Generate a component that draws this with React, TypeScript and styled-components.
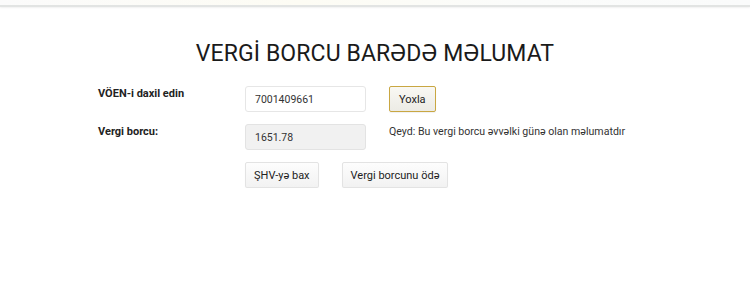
import React from 'react'
import styled, { createGlobalStyle } from 'styled-components'

const GlobalStyle = createGlobalStyle`
  html, body {
    margin: 0;
    padding: 0;
    background: #fff;
    font-family: Roboto, 'Liberation Sans', Arial, sans-serif;
    color: #222;
  }
`

const TopBar = styled.div`
  height: 5px;
  background: linear-gradient(90deg, #fbfbfb, #fdfcf4 40%, #fbfcfb 70%, #fafbfb);
  border-bottom: 2px solid #e2e4e3;
  box-shadow: 0 1px 2px rgba(0, 0, 0, 0.06);
`

const Page = styled.main`
  display: flex;
  flex-direction: column;
`

const Title = styled.h1`
  margin: 32px 0 0;
  text-align: center;
  font-size: 23px;
  font-weight: 400;
  line-height: 30px;
  color: #1a1a1a;
  letter-spacing: 0.1px;
`

const Form = styled.div`
  display: grid;
  grid-template-columns: 124px 121px auto;
  column-gap: 23px;
  row-gap: 12px;
  margin: 17px 0 0 98px;
  align-items: start;
`

const Label = styled.label`
  font-size: 11px;
  font-weight: 700;
  color: #222;
  padding-top: 1px;
  line-height: 14px;
`

const Field = styled.input<{ $readOnly?: boolean }>`
  box-sizing: border-box;
  width: 121px;
  height: 26px;
  padding: 0 9px;
  border: 1px solid ${({ $readOnly }) => ($readOnly ? '#e3e3e3' : '#e6e6e6')};
  border-radius: 3px;
  background: ${({ $readOnly }) => ($readOnly ? '#f1f1f1' : '#fff')};
  font-family: inherit;
  font-size: 10.5px;
  color: #333;
  outline: none;
`

const Note = styled.span`
  font-size: 10.6px;
  color: #333;
  padding-top: 1px;
  line-height: 14px;
`

const Button = styled.button<{ $accent?: boolean }>`
  box-sizing: border-box;
  height: 26px;
  padding: 0 ${({ $accent }) => ($accent ? '9px' : '8px')};
  border: 1px solid ${({ $accent }) => ($accent ? '#c9a742' : '#e3e3e3')};
  border-radius: 2px;
  background: ${({ $accent }) =>
    $accent ? 'linear-gradient(#f9f8f3, #ecebe5)' : 'linear-gradient(#fdfdfd, #f2f2f2)'};
  box-shadow: 0 1px 1px rgba(0, 0, 0, 0.06);
  font-family: inherit;
  font-size: 11px;
  color: #222;
  cursor: pointer;
`

const Actions = styled.div`
  grid-column: 2 / 4;
  display: flex;
  gap: 23px;
`

const Spacer = styled.div``

const App = () => {
  return (
    <>
      <GlobalStyle />
      <TopBar />
      <Page>
        <Title>VERGİ BORCU BARƏDƏ MƏLUMAT</Title>
        <Form>
          <Label>VÖEN-i daxil edin</Label>
          <Field defaultValue='7001409661' />
          <div>
            <Button $accent>Yoxla</Button>
          </div>
          <Label>Vergi borcu:</Label>
          <Field $readOnly readOnly value='1651.78' />
          <Note>Qeyd: Bu vergi borcu əvvəlki günə olan məlumatdır</Note>
          <Spacer />
          <Actions>
            <Button>ŞHV-yə bax</Button>
            <Button>Vergi borcunu ödə</Button>
          </Actions>
        </Form>
      </Page>
    </>
  )
}

export default App
